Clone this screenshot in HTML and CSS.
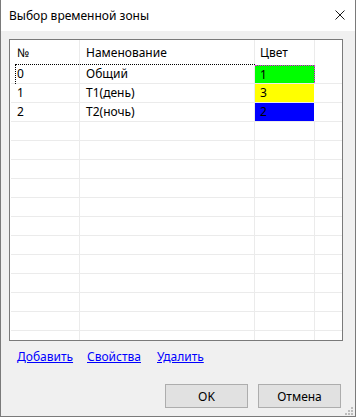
FILE: index.html
```html
<!DOCTYPE html>
<html lang="ru">
<head>
  <meta charset="UTF-8" />
  <title>Выбор временной зоны</title>
  <link rel="stylesheet" href="styles.css">
</head>
<body>
  <div class="window">
    <div class="titlebar">
      <span class="title">Выбор временной зоны</span>
      <svg class="close" width="10" height="10" viewBox="0 0 10 10">
        <path d="M0.5 0.5 L9.5 9.5 M9.5 0.5 L0.5 9.5" stroke="#1a1a1a" stroke-width="1" fill="none" />
      </svg>
    </div>
    <div class="client">
      <!-- Zone list -->
      <div class="list">
        <div class="row head">
          <div class="cell c1">№</div>
          <div class="cell c2">Наменование</div>
          <div class="cell c3">Цвет</div>
          <div class="cell c4"></div>
        </div>
        <div class="row focused">
          <div class="cell c1">0</div>
          <div class="cell c2">Общий</div>
          <div class="cell c3 swatch green">1</div>
          <div class="cell c4"></div>
        </div>
        <div class="row">
          <div class="cell c1">1</div>
          <div class="cell c2">T1(день)</div>
          <div class="cell c3 swatch yellow">3</div>
          <div class="cell c4"></div>
        </div>
        <div class="row">
          <div class="cell c1">2</div>
          <div class="cell c2">T2(ночь)</div>
          <div class="cell c3 swatch blue">2</div>
          <div class="cell c4"></div>
        </div>
        <div class="row"><div class="cell c1"></div><div class="cell c2"></div><div class="cell c3"></div><div class="cell c4"></div></div>
        <div class="row"><div class="cell c1"></div><div class="cell c2"></div><div class="cell c3"></div><div class="cell c4"></div></div>
        <div class="row"><div class="cell c1"></div><div class="cell c2"></div><div class="cell c3"></div><div class="cell c4"></div></div>
        <div class="row"><div class="cell c1"></div><div class="cell c2"></div><div class="cell c3"></div><div class="cell c4"></div></div>
        <div class="row"><div class="cell c1"></div><div class="cell c2"></div><div class="cell c3"></div><div class="cell c4"></div></div>
        <div class="row"><div class="cell c1"></div><div class="cell c2"></div><div class="cell c3"></div><div class="cell c4"></div></div>
        <div class="row"><div class="cell c1"></div><div class="cell c2"></div><div class="cell c3"></div><div class="cell c4"></div></div>
        <div class="row"><div class="cell c1"></div><div class="cell c2"></div><div class="cell c3"></div><div class="cell c4"></div></div>
        <div class="row"><div class="cell c1"></div><div class="cell c2"></div><div class="cell c3"></div><div class="cell c4"></div></div>
        <div class="row"><div class="cell c1"></div><div class="cell c2"></div><div class="cell c3"></div><div class="cell c4"></div></div>
        <div class="row"><div class="cell c1"></div><div class="cell c2"></div><div class="cell c3"></div><div class="cell c4"></div></div>
        <div class="row"><div class="cell c1"></div><div class="cell c2"></div><div class="cell c3"></div><div class="cell c4"></div></div>
      </div>

      <!-- Actions -->
      <div class="links">
        <a href="#">Добавить</a>
        <a href="#">Свойства</a>
        <a href="#">Удалить</a>
      </div>

      <div class="buttons">
        <button>OK</button>
        <button>Отмена</button>
      </div>

      <svg class="grip" width="9" height="9" viewBox="0 0 9 9">
        <rect x="6" y="0" width="2" height="2" fill="#bcbcbc" />
        <rect x="3" y="3" width="2" height="2" fill="#bcbcbc" />
        <rect x="6" y="3" width="2" height="2" fill="#bcbcbc" />
        <rect x="0" y="6" width="2" height="2" fill="#bcbcbc" />
        <rect x="3" y="6" width="2" height="2" fill="#bcbcbc" />
        <rect x="6" y="6" width="2" height="2" fill="#bcbcbc" />
      </svg>
    </div>
  </div>
</body>
</html>
```

FILE: styles.css
```css
body {
  margin: 0;
  padding: 0;
  background: #ffffff;
  font-family: "Segoe UI", "Noto Sans", "Liberation Sans", sans-serif;
  font-size: 12px;
  color: #000;
}
.window {
  width: 356px;
  height: 417px;
  box-sizing: border-box;
  border: 1px solid #7a7a7a;
  border-top: none;
  display: flex;
  flex-direction: column;
}
.titlebar {
  height: 31px;
  flex: none;
  background: #fff;
  display: flex;
  align-items: center;
  padding-left: 8px;
  padding-right: 10px;
}
.title {
  flex: 1;
  font-size: 12px;
  margin-top: -1px;
}
.close {
  display: block;
  margin-top: -1px;
}
.client {
  flex: 1;
  background: #f0f0f0;
  position: relative;
  display: flex;
  flex-direction: column;
}
/* List view */
.list {
  margin: 8px 0 0 8px;
  width: 334px;
  height: 302px;
  box-sizing: border-box;
  border: 1px solid #7a7a7a;
  background: #fff;
  padding-left: 1px;
  overflow: hidden;
}
.row {
  display: flex;
  height: 19px;
  border-bottom: 1px solid #ebebeb;
  box-sizing: border-box;
  position: relative;
}
.row.head {
  height: 25px;
  border-bottom: none;
}
.cell {
  box-sizing: border-box;
  height: 100%;
  line-height: 18px;
  padding-left: 6px;
  border-right: 1px solid #ebebeb;
  white-space: nowrap;
}
.head .cell {
  line-height: 25px;
}
.c1 { width: 69px; }
.c2 { width: 175px; }
.c3 { width: 60px; padding-left: 5px; }
.c4 { width: 27px; border-right: none; }
.swatch {
  border-right-color: #fff;
}
.green { background: #00ff00; }
.yellow { background: #ffff00; }
.blue { background: #0000ff; }
/* focus rectangle on the current row */
.focused::before {
  content: "";
  position: absolute;
  left: 4px;
  top: -1px;
  width: 239px;
  height: 19px;
  border-top: 1px dotted #000;
  border-left: 1px dotted #000;
}
.focused .green {
  border-top: 1px dotted #ff00ff;
  border-right: 1px dotted #ff00ff;
  line-height: 17px;
}
.links {
  margin-top: 8px;
  padding-left: 16px;
  display: grid;
  grid-template-columns: 70px 70px 70px;
  line-height: 16px;
}
.links a {
  color: #0000ff;
  text-decoration: underline;
}
.buttons {
  margin-top: 19px;
  display: flex;
  justify-content: flex-end;
  gap: 10px;
  padding-right: 14px;
}
.buttons button {
  width: 83px;
  height: 24px;
  background: #e1e1e1;
  border: 1px solid #adadad;
  border-radius: 0;
  font-family: inherit;
  font-size: 12px;
  color: #000;
  padding: 0;
}
.grip {
  position: absolute;
  right: 1px;
  bottom: 0px;
}
```
